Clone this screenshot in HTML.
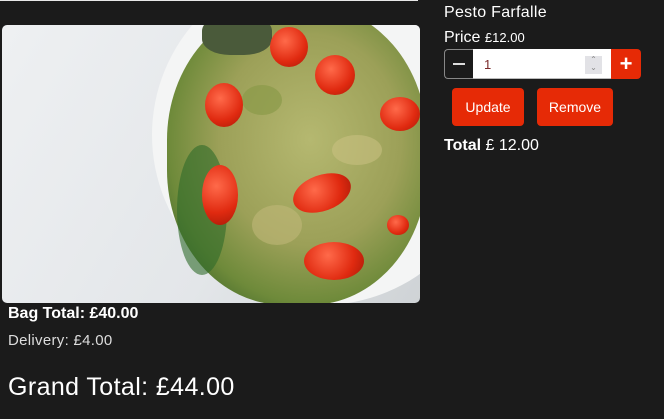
<!DOCTYPE html>
<html><head><style>
body{margin:0;background:#1b1b1b;width:664px;height:419px;overflow:hidden;font-family:"Liberation Sans",sans-serif;color:#fff;position:relative}
.a{position:absolute}
.img{left:2px;top:25px;width:418px;height:278px;border-radius:5px;overflow:hidden;background:linear-gradient(120deg,#eef0f2,#e3e6e9 60%,#cfd3d6)}
.tom{position:absolute;border-radius:50%;background:radial-gradient(circle at 40% 35%,#ff6a4a,#e02a10 60%,#a81a08)}
.btn{background:#e62a06;border-radius:4px;color:#fff;font-size:14px;text-align:center}
</style></head><body>
<div class="a" style="left:0;top:0;width:418px;height:1px;background:#e8e8e8"></div>
<div class="a img">
 <div class="a" style="left:150px;top:-60px;width:340px;height:340px;border-radius:50%;background:#f4f5f5"></div>
 <div class="a" style="left:165px;top:-20px;width:260px;height:300px;border-radius:45%;background:radial-gradient(ellipse at 55% 45%,#b5b870,#9ca058 45%,#6e8a3a 70%,#2f5a25 92%)"></div>
 <div class="a" style="left:240px;top:60px;width:40px;height:30px;border-radius:50%;background:#8a9a48;opacity:.7"></div>
 <div class="a" style="left:330px;top:110px;width:50px;height:30px;border-radius:50%;background:#c8c080;opacity:.6"></div>
 <div class="a" style="left:250px;top:180px;width:50px;height:40px;border-radius:50%;background:#c0b878;opacity:.6"></div>
 <div class="a" style="left:175px;top:120px;width:50px;height:130px;border-radius:50%;background:#2f6a2a;opacity:.6"></div>
 <div class="a" style="left:200px;top:-10px;width:70px;height:40px;border-radius:40%;background:#4a5a3a"></div>
 <div class="tom" style="left:268px;top:2px;width:38px;height:40px"></div>
 <div class="tom" style="left:313px;top:30px;width:40px;height:40px"></div>
 <div class="tom" style="left:203px;top:58px;width:38px;height:44px"></div>
 <div class="tom" style="left:378px;top:72px;width:40px;height:34px"></div>
 <div class="tom" style="left:200px;top:140px;width:36px;height:60px"></div>
 <div class="tom" style="left:290px;top:150px;width:60px;height:36px;transform:rotate(-20deg)"></div>
 <div class="tom" style="left:302px;top:217px;width:60px;height:38px"></div>
 <div class="tom" style="left:385px;top:190px;width:22px;height:20px"></div>
</div>
<div class="a" style="left:444px;top:4px;font-size:16px;letter-spacing:.3px">Pesto Farfalle</div>
<div class="a" style="left:444px;top:29px;font-size:16px">Price <span style="font-size:13px">£12.00</span></div>
<div class="a" style="left:444px;top:49px;width:29px;height:30px;border:1px solid #888;border-right:none;border-radius:4px 0 0 4px;box-sizing:border-box"></div>
<div class="a" style="left:453px;top:63px;width:12px;height:2px;background:#ddd"></div>
<div class="a" style="left:473px;top:49px;width:138px;height:30px;background:#fff;border-bottom:1px solid #bbb;box-sizing:border-box"></div>
<div class="a" style="left:484px;top:57px;font-size:13px;color:#7a2a2a">1</div>
<div class="a" style="left:585px;top:56px;width:17px;height:18px;background:#e2e2e6;color:#888;font-size:8px;line-height:8px;text-align:center">⌃<br>⌄</div>
<div class="a btn" style="left:611px;top:49px;width:30px;height:30px;line-height:30px;font-size:22px;font-weight:bold;border-radius:0 4px 4px 0">+</div>
<div class="a btn" style="left:452px;top:88px;width:72px;height:38px;line-height:38px">Update</div>
<div class="a btn" style="left:537px;top:88px;width:76px;height:38px;line-height:38px">Remove</div>
<div class="a" style="left:444px;top:137px;font-size:16px"><b>Total</b> £ 12.00</div>
<div class="a" style="left:8px;top:305px;font-size:16px;font-weight:bold">Bag Total: £40.00</div>
<div class="a" style="left:8px;top:332px;font-size:15px;color:#ddd;letter-spacing:.3px">Delivery: £4.00</div>
<div class="a" style="left:8px;top:373px;font-size:25px;letter-spacing:.4px">Grand Total: £44.00</div>
</body></html>
